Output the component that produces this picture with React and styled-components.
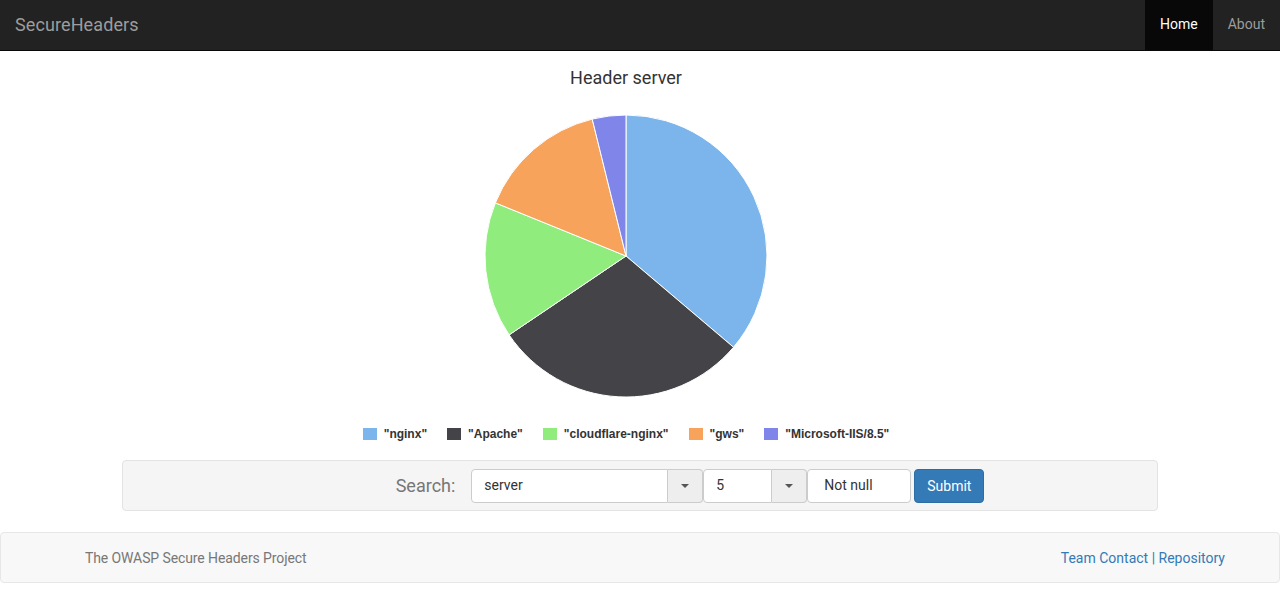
import React from "react";
import styled, { createGlobalStyle } from "styled-components";

const Global = createGlobalStyle`
  html, body { margin: 0; padding: 0; background: #fff; }
  body {
    font-family: Roboto, "Helvetica Neue", Arial, sans-serif;
    font-size: 14px;
    line-height: 1.42857;
    color: #333;
  }
  * { box-sizing: border-box; }
`;

const Navbar = styled.nav`
  height: 51px;
  background: #222;
  border-bottom: 1px solid #080808;
  display: flex;
  align-items: stretch;
  justify-content: space-between;
`;

const Brand = styled.a`
  display: flex;
  align-items: center;
  padding: 0 15px;
  font-size: 18px;
  letter-spacing: 0.1px;
  color: #9d9d9d;
  text-decoration: none;
`;

const NavList = styled.div`
  display: flex;
`;

const NavItem = styled.a`
  display: flex;
  align-items: center;
  padding: 0 15px;
  font-size: 14px;
  text-decoration: none;
  color: ${(p) => (p.$active ? "#fff" : "#9d9d9d")};
  background: ${(p) => (p.$active ? "#080808" : "transparent")};
`;

const ChartArea = styled.section`
  width: 1252px;
  display: flex;
  flex-direction: column;
  align-items: center;
  padding-top: 16px;
`;

const ChartTitle = styled.h2`
  margin: 0;
  font-size: 18px;
  font-weight: 400;
  line-height: 21px;
  color: #333;
`;

const PieSvg = styled.svg`
  display: block;
  margin-top: 26px;
`;

const Legend = styled.div`
  display: flex;
  gap: 20px;
  margin-top: 29px;
  height: 14px;
  align-items: center;
`;

const LegendItem = styled.div`
  display: flex;
  align-items: center;
  gap: 7px;
  font-family: "Liberation Sans", Arial, sans-serif;
  font-weight: 700;
  font-size: 12px;
  line-height: 14px;
  color: #333;
`;

const Swatch = styled.span`
  width: 14px;
  height: 12px;
  background: ${(p) => p.$color};
`;

const Well = styled.div`
  margin: 19px 122px 0 122px;
  height: 51px;
  background: #f5f5f5;
  border: 1px solid #e3e3e3;
  border-radius: 4px;
  display: flex;
  align-items: center;
  justify-content: center;
  padding-left: 100px;
`;

const SearchLabel = styled.label`
  font-size: 18px;
  color: #777;
  margin-right: 16px;
`;

const Group = styled.div`
  display: flex;
  height: 34px;
`;

const Input = styled.div`
  width: ${(p) => p.$w}px;
  height: 34px;
  display: flex;
  align-items: center;
  padding-left: ${(p) => p.$pl || 12}px;
  background: #fff;
  border: 1px solid #ccc;
  border-radius: ${(p) => (p.$alone ? "4px" : "4px 0 0 4px")};
  font-size: 14px;
  color: #333;
`;

const Addon = styled.div`
  width: 35px;
  height: 34px;
  display: flex;
  align-items: center;
  justify-content: center;
  background: #eee;
  border: 1px solid #ccc;
  border-left: none;
  border-radius: 0 4px 4px 0;
`;

const Caret = styled.span`
  width: 0;
  height: 0;
  border-left: 4px solid transparent;
  border-right: 4px solid transparent;
  border-top: 4px solid #555;
`;

const Button = styled.button`
  width: 70px;
  height: 34px;
  margin-left: 3px;
  background: #337ab7;
  border: 1px solid #2e6da4;
  border-radius: 4px;
  color: #fff;
  font-family: inherit;
  font-size: 14px;
  padding: 0;
`;

const Footer = styled.footer`
  margin-top: 21px;
  height: 51px;
  background: #f8f8f8;
  border: 1px solid #e7e7e7;
  border-radius: 4px;
  display: flex;
  align-items: center;
  justify-content: space-between;
  padding: 2px 54px 0 84px;
`;

const FooterText = styled.span`
  color: #777;
  font-size: 14px;
  letter-spacing: -0.1px;
`;

const FooterLinks = styled.span`
  color: #337ab7;
  font-size: 14px;
`;

const FooterLink = styled.a`
  color: #337ab7;
  text-decoration: none;
`;

const data = [
  { name: '"nginx"', value: 36.2, color: "#7cb5ec" },
  { name: '"Apache"', value: 29.35, color: "#434348" },
  { name: '"cloudflare-nginx"', value: 15.6, color: "#90ed7d" },
  { name: '"gws"', value: 15.0, color: "#f7a35c" },
  { name: '"Microsoft-IIS/8.5"', value: 3.85, color: "#8085e9" },
];

function Pie() {
  const cx = 142, cy = 142, r = 141;
  const total = data.reduce((s, d) => s + d.value, 0);
  let acc = 0;
  const pt = (a) => {
    const rad = (a * Math.PI) / 180;
    return [cx + r * Math.sin(rad), cy - r * Math.cos(rad)];
  };
  return (
    <PieSvg width="284" height="284" viewBox="0 0 284 284">
      {data.map((d) => {
        const a0 = (acc / total) * 360;
        acc += d.value;
        const a1 = (acc / total) * 360;
        const [x0, y0] = pt(a0);
        const [x1, y1] = pt(a1);
        const large = a1 - a0 > 180 ? 1 : 0;
        return (
          <path
            key={d.name}
            d={`M${cx},${cy} L${x0},${y0} A${r},${r} 0 ${large} 1 ${x1},${y1} Z`}
            fill={d.color}
            stroke="#fff"
            strokeWidth="1"
            strokeLinejoin="round"
          />
        );
      })}
    </PieSvg>
  );
}

export default function App() {
  return (
    <>
      <Global />
      <Navbar>
        <Brand href="#">SecureHeaders</Brand>
        <NavList>
          <NavItem $active href="#">Home</NavItem>
          <NavItem href="#">About</NavItem>
        </NavList>
      </Navbar>
      <ChartArea>
        <ChartTitle>Header server</ChartTitle>
        <Pie />
        <Legend>
          {data.map((d) => (
            <LegendItem key={d.name}>
              <Swatch $color={d.color} />
              {d.name}
            </LegendItem>
          ))}
        </Legend>
      </ChartArea>
      <Well>
        <SearchLabel>Search:</SearchLabel>
        <Group>
          <Input $w={197}>server</Input>
          <Addon><Caret /></Addon>
        </Group>
        <Group>
          <Input $w={69}>5</Input>
          <Addon><Caret /></Addon>
        </Group>
        <Group>
          <Input $w={104} $pl={16} $alone>Not null</Input>
        </Group>
        <Button>Submit</Button>
      </Well>
      <Footer>
        <FooterText>The OWASP Secure Headers Project</FooterText>
        <FooterLinks>
          <FooterLink href="#">Team Contact</FooterLink> | <FooterLink href="#">Repository</FooterLink>
        </FooterLinks>
      </Footer>
    </>
  );
}
